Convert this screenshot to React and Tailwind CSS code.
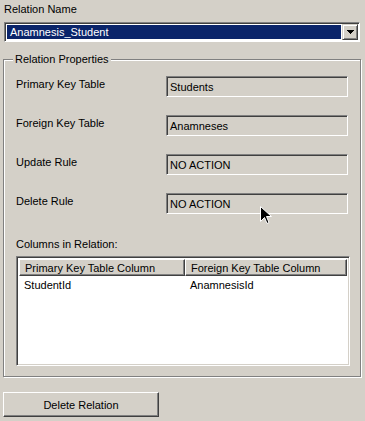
import React from "react";

function Field({ label, value }) {
  return (
    <div className="flex items-start h-[21px]">
      <div className="w-[150px] pt-[1px] leading-[14px]">{label}</div>
      <div className="w-[182px] h-[21px] border-t border-l border-t-[#808080] border-l-[#808080] border-b border-r border-b-white border-r-white shadow-[inset_1px_1px_0_#404040] flex items-center pl-[3px] leading-[14px]">
        {value}
      </div>
    </div>
  );
}

export default function App() {
  return (
    <div
      className="relative w-[365px] h-[421px] bg-[#d4d0c8] text-black text-[11px] overflow-hidden flex flex-col"
      style={{ fontFamily: '"Liberation Sans", Arial, sans-serif' }}
    >
      <div className="pl-[4px] pt-[2px] leading-[14px] h-[20px]">Relation Name</div>

      {/* Combo box */}
      <div className="mx-[4px] mt-[2px] h-[20px] w-[356px] border-t border-l border-t-[#808080] border-l-[#808080] border-b border-r border-b-white border-r-white shadow-[inset_1px_1px_0_#404040] bg-white flex items-stretch p-[1px]">
        <div className="flex-1 bg-[#0a246a] text-white flex items-center pl-[3px] m-[1px] leading-[14px]">
          Anamnesis_Student
        </div>
        <div className="w-[16px] bg-[#d4d0c8] border-t border-l border-t-[#d4d0c8] border-l-[#d4d0c8] border-b border-r border-b-[#404040] border-r-[#404040] shadow-[inset_1px_1px_0_#fff,inset_-1px_-1px_0_#808080] flex items-center justify-center">
          <svg width="7" height="4" viewBox="0 0 7 4">
            <path d="M0 0h7v1H0zM1 1h5v1H1zM2 2h3v1H2zM3 3h1v1H3z" fill="#000" />
          </svg>
        </div>
      </div>

      {/* Group box */}
      <div className="relative mx-[3px] mt-[17px] w-[358px] h-[318px] border border-[#808080] shadow-[inset_1px_1px_0_#fff,1px_1px_0_#fff] flex flex-col pl-[12px]">
        <div className="absolute left-[9px] top-[-8px] px-[2px] bg-[#d4d0c8] leading-[14px]">
          Relation Properties
        </div>
        <div className="mt-[16px] flex flex-col gap-[18px]">
          <Field label="Primary Key Table" value="Students" />
          <Field label="Foreign Key Table" value="Anamneses" />
          <Field label="Update Rule" value="NO ACTION" />
          <Field label="Delete Rule" value="NO ACTION" />
        </div>
        <div className="mt-[23px] leading-[14px]">Columns in Relation:</div>
        <div className="mt-[5px] w-[334px] h-[110px] border-t border-l border-t-[#808080] border-l-[#808080] border-b border-r border-b-white border-r-white shadow-[inset_1px_1px_0_#404040,inset_-1px_-1px_0_#d4d0c8] bg-white p-[2px] flex flex-col">
          <div className="flex h-[17px]">
            <div className="w-[166px] bg-[#d4d0c8] border-t border-l border-t-white border-l-white border-b border-r border-b-[#404040] border-r-[#404040] shadow-[inset_-1px_-1px_0_#808080] flex items-center pl-[5px] leading-[14px]">
              Primary Key Table Column
            </div>
            <div className="flex-1 bg-[#d4d0c8] border-t border-l border-t-white border-l-white border-b border-r border-b-[#404040] border-r-[#404040] shadow-[inset_-1px_-1px_0_#808080] flex items-center pl-[5px] leading-[14px]">
              Foreign Key Table Column
            </div>
          </div>
          <div className="flex h-[17px] items-center leading-[14px]">
            <div className="w-[166px] pl-[5px]">StudentId</div>
            <div className="flex-1 pl-[5px]">AnamnesisId</div>
          </div>
        </div>
      </div>

      {/* Button */}
      <div className="mt-[15px] ml-[3px] w-[156px] h-[25px] bg-[#d4d0c8] border-t border-l border-t-white border-l-white border-b border-r border-b-[#404040] border-r-[#404040] shadow-[inset_-1px_-1px_0_#808080] flex items-center justify-center leading-[14px]">
        Delete Relation
      </div>

      {/* Mouse cursor */}
      <svg
        className="absolute left-[260px] top-[206px]"
        width="12"
        height="19"
        viewBox="0 0 12 19"
      >
        <path
          d="M0.5 0.5 L0.5 15.5 L4.5 11.5 L7 17.5 L9 16.5 L6.5 10.5 L11.5 10.5 Z"
          fill="#000"
          stroke="#fff"
          strokeWidth="1"
        />
      </svg>
    </div>
  );
}
